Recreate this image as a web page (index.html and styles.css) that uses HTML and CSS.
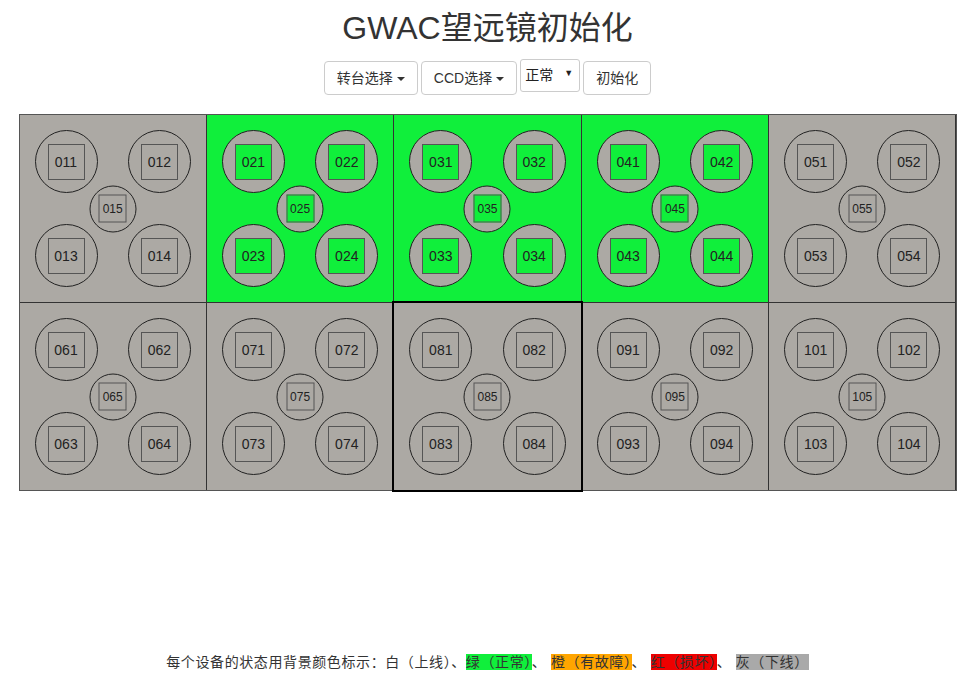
FILE: index.html
```html
<!DOCTYPE html>
<html lang="zh-CN">
<head>
<meta charset="utf-8">
<title>GWAC望远镜初始化</title>
<link rel="stylesheet" href="styles.css">
</head>
<body>
<div class="page">
  <h1 class="title">GWAC望远镜初始化</h1>
  <div class="toolbar">
    <button class="btn">转台选择 <span class="caret"></span></button>
    <button class="btn">CCD选择 <span class="caret"></span></button>
    <div class="select-wrap">
      <select class="select"><option>正常</option><option>故障</option></select>
      <span class="select-arrow">▼</span>
    </div>
    <button class="btn">初始化</button>
  </div>

  <div class="grid">
    <div class="cell off">
      <div class="mount"><div class="ccd off">011</div></div>
      <div class="mount"><div class="ccd off">012</div></div>
      <div class="mount"><div class="ccd off">013</div></div>
      <div class="mount"><div class="ccd off">014</div></div>
      <div class="mount small"><div class="ccd off">015</div></div>
    </div>
    <div class="cell ok">
      <div class="mount"><div class="ccd ok">021</div></div>
      <div class="mount"><div class="ccd ok">022</div></div>
      <div class="mount"><div class="ccd ok">023</div></div>
      <div class="mount"><div class="ccd ok">024</div></div>
      <div class="mount small"><div class="ccd ok">025</div></div>
    </div>
    <div class="cell ok">
      <div class="mount"><div class="ccd ok">031</div></div>
      <div class="mount"><div class="ccd ok">032</div></div>
      <div class="mount"><div class="ccd ok">033</div></div>
      <div class="mount"><div class="ccd ok">034</div></div>
      <div class="mount small"><div class="ccd ok">035</div></div>
    </div>
    <div class="cell ok">
      <div class="mount"><div class="ccd ok">041</div></div>
      <div class="mount"><div class="ccd ok">042</div></div>
      <div class="mount"><div class="ccd ok">043</div></div>
      <div class="mount"><div class="ccd ok">044</div></div>
      <div class="mount small"><div class="ccd ok">045</div></div>
    </div>
    <div class="cell off">
      <div class="mount"><div class="ccd off">051</div></div>
      <div class="mount"><div class="ccd off">052</div></div>
      <div class="mount"><div class="ccd off">053</div></div>
      <div class="mount"><div class="ccd off">054</div></div>
      <div class="mount small"><div class="ccd off">055</div></div>
    </div>
    <div class="cell off">
      <div class="mount"><div class="ccd off">061</div></div>
      <div class="mount"><div class="ccd off">062</div></div>
      <div class="mount"><div class="ccd off">063</div></div>
      <div class="mount"><div class="ccd off">064</div></div>
      <div class="mount small"><div class="ccd off">065</div></div>
    </div>
    <div class="cell off">
      <div class="mount"><div class="ccd off">071</div></div>
      <div class="mount"><div class="ccd off">072</div></div>
      <div class="mount"><div class="ccd off">073</div></div>
      <div class="mount"><div class="ccd off">074</div></div>
      <div class="mount small"><div class="ccd off">075</div></div>
    </div>
    <div class="cell off selected">
      <div class="mount"><div class="ccd off">081</div></div>
      <div class="mount"><div class="ccd off">082</div></div>
      <div class="mount"><div class="ccd off">083</div></div>
      <div class="mount"><div class="ccd off">084</div></div>
      <div class="mount small"><div class="ccd off">085</div></div>
    </div>
    <div class="cell off">
      <div class="mount"><div class="ccd off">091</div></div>
      <div class="mount"><div class="ccd off">092</div></div>
      <div class="mount"><div class="ccd off">093</div></div>
      <div class="mount"><div class="ccd off">094</div></div>
      <div class="mount small"><div class="ccd off">095</div></div>
    </div>
    <div class="cell off">
      <div class="mount"><div class="ccd off">101</div></div>
      <div class="mount"><div class="ccd off">102</div></div>
      <div class="mount"><div class="ccd off">103</div></div>
      <div class="mount"><div class="ccd off">104</div></div>
      <div class="mount small"><div class="ccd off">105</div></div>
    </div>
  </div>

  <p class="legend">每个设备的状态用背景颜色标示：白（上线）、<span class="lg lg-green">绿（正常）</span>、 <span class="lg lg-orange">橙（有故障）</span>、 <span class="lg lg-red">红（损坏）</span>、 <span class="lg lg-gray">灰（下线）</span></p>
</div>
</body>
</html>
```

FILE: styles.css
```css
* { box-sizing: border-box; }

html, body {
  margin: 0;
  padding: 0;
  height: 100%;
}

body {
  font-family: "Liberation Sans", "Noto Sans CJK SC", sans-serif;
  font-size: 14px;
  color: #333;
  background: #fff;
}

.page {
  min-height: 100vh;
  display: flex;
  flex-direction: column;
  align-items: center;
}

.title {
  margin: 8px 0 0;
  font-size: 32px;
  line-height: 40px;
  font-weight: 400;
  color: #333;
  font-family: "Liberation Sans", "Noto Sans CJK SC", sans-serif;
}

.toolbar {
  margin-top: 13px;
  display: flex;
  align-items: flex-start;
  gap: 3px;
  height: 34px;
}

.btn {
  font-family: "Liberation Sans", "Noto Sans CJK SC", sans-serif;
  font-size: 14px;
  line-height: 20px;
  color: #333;
  background: #fff;
  border: 1px solid #ccc;
  border-radius: 4px;
  padding: 6px 12px;
  height: 34px;
  display: flex;
  align-items: center;
  gap: 4px;
}

.caret {
  display: inline-block;
  width: 0;
  height: 0;
  border-top: 4px solid #333;
  border-left: 4px solid transparent;
  border-right: 4px solid transparent;
  margin-top: 1px;
}

.select-wrap {
  position: relative;
  width: 60px;
  height: 33px;
  margin-top: -2px;
}

.select {
  appearance: none;
  -webkit-appearance: none;
  width: 60px;
  height: 33px;
  border: 1px solid #ccc;
  border-radius: 3px;
  background: #fff;
  font-family: "Liberation Sans", "Noto Sans CJK SC", sans-serif;
  font-size: 14px;
  color: #222;
  padding: 0 0 2px 4px;
}

.select-arrow {
  position: absolute;
  right: 7px;
  top: 9px;
  font-size: 9px;
  color: #222;
  pointer-events: none;
}

.grid {
  margin-top: 19px;
  width: 938px;
  display: grid;
  grid-template-columns: repeat(5, 1fr);
  grid-auto-rows: 187px;
  gap: 1px;
  background: #333;
  border: 1px solid #555;
}

.cell {
  position: relative;
  display: grid;
  grid-template-columns: 63px 63px;
  grid-template-rows: 63px 63px;
  justify-content: space-between;
  align-content: space-between;
  padding: 15px;
}

.cell.off { background: #aca9a4; }
.cell.ok { background: #10ef3b; }

.cell.selected {
  outline: 2px solid #000;
  outline-offset: 0;
  z-index: 1;
}

.mount {
  width: 63px;
  height: 63px;
  border: 1px solid #222;
  border-radius: 50%;
  background: #aca9a4;
  display: flex;
  align-items: center;
  justify-content: center;
}

.mount.small {
  position: absolute;
  width: 47px;
  height: 47px;
  left: 50%;
  top: 50%;
  transform: translate(-50%, -50%);
}

.ccd {
  width: 37px;
  height: 36px;
  border: 1.5px solid #555;
  display: flex;
  align-items: center;
  justify-content: center;
  font-size: 14px;
  color: #222;
  font-family: "Liberation Sans", sans-serif;
}

.small .ccd {
  width: 28px;
  height: 28px;
  font-size: 12px;
}

.ccd.off { background: #aca9a4; }
.ccd.ok { background: #10ef3b; }

.legend {
  margin: auto 0 10px;
  font-size: 14px;
  line-height: 20px;
  letter-spacing: 0.6px;
  color: #333;
  font-family: "Liberation Sans", "Noto Sans CJK SC", sans-serif;
}

.lg-green { background: #10ef3b; }
.lg-orange { background: #ffa500; }
.lg-red { background: #ee0000; }
.lg-gray { background: #a9a9a9; }
```
